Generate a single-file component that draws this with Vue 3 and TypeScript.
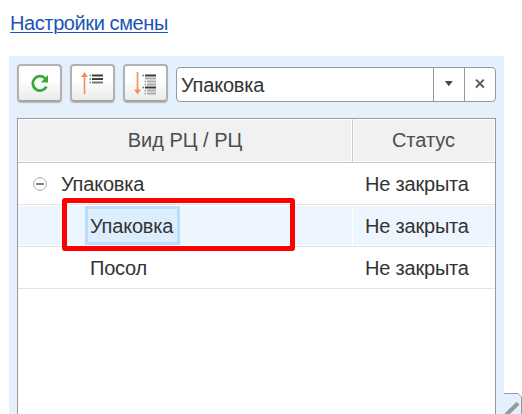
<script setup lang="ts">
import { ref } from 'vue'

interface Row {
  id: number
  name: string
  status: string
  level: number
}

const rows: Row[] = [
  { id: 1, name: 'Упаковка', status: 'Не закрыта', level: 0 },
  { id: 2, name: 'Упаковка', status: 'Не закрыта', level: 1 },
  { id: 3, name: 'Посол', status: 'Не закрыта', level: 1 },
]
const selected = ref(2)
const query = ref('Упаковка')
</script>

<template>
  <div class="page">
    <a class="link">Настройки смены</a>
    <section class="panel">
      <div class="toolbar">
        <button class="btn">
          <svg width="39" height="32" viewBox="0 0 39 32">
            <path d="M26.4 19.6A7.2 7.2 0 1 1 25.4 11.6" fill="none" stroke="#35a936" stroke-width="2.7" />
            <path d="M28 8V15.6H20.8Z" fill="#35a936" />
          </svg>
        </button>
        <button class="btn">
          <svg width="39" height="32" viewBox="0 0 39 32">
            <path d="M11.5 9V27" stroke="#f68d57" stroke-width="1.6" />
            <path d="M11.5 5L15 10H8Z" fill="#f68d57" />
            <path d="M16.5 8.5H18M16.5 12H18M16.5 15.5H18" stroke="#777" stroke-width="1.4" />
            <path d="M19 8.5H30M19 12H30" stroke="#3f3f3f" stroke-width="2.2" />
            <path d="M19 15.5H30" stroke="#777" stroke-width="2" />
          </svg>
        </button>
        <button class="btn">
          <svg width="39" height="32" viewBox="0 0 39 32">
            <path d="M11.5 5V23" stroke="#f68d57" stroke-width="1.6" />
            <path d="M11.5 27.4L15 22.4H8Z" fill="#f68d57" />
            <path d="M16.5 8.5H18M16.5 20.5H18" stroke="#666" stroke-width="1.6" />
            <path d="M19 8.5H30M19 20.5H30" stroke="#3a3a3a" stroke-width="2.2" />
            <path d="M19 11.5H30M21 14.5H30M21 17.5H30M21 23.5H30M21 26.5H30" stroke="#aaa" stroke-width="1.8" />
            <path d="M18.5 14.5H20M18.5 17.5H20M18.5 23.5H20M18.5 26.5H20" stroke="#999" stroke-width="1.4" />
          </svg>
        </button>
        <div class="combo">
          <span class="value">{{ query }}</span>
          <span class="part">
            <svg width="30" height="33" viewBox="0 0 30 33"><path d="M10.8 13H18.8L14.8 18.2Z" fill="#4a4a4a" /></svg>
          </span>
          <span class="part">
            <svg width="30" height="33" viewBox="0 0 30 33"><path d="M11 11.7L18.8 19.5M18.8 11.7L11 19.5" stroke="#555" stroke-width="1.8" /></svg>
          </span>
        </div>
      </div>
      <div class="table">
        <div class="line head">
          <div class="cell name">Вид РЦ / РЦ</div>
          <div class="cell status">Статус</div>
        </div>
        <div v-for="row in rows" :key="row.id" class="line row" :class="{ active: row.id === selected }">
          <div class="cell name" :class="{ child: row.level > 0 }">
            <svg v-if="row.level === 0" class="toggle" width="14" height="14" viewBox="0 0 14 14">
              <circle cx="7" cy="7" r="6.4" fill="#fff" stroke="#aaa" />
              <path d="M3 7H11" stroke="#777" stroke-width="1.8" />
            </svg>
            <span class="label">{{ row.name }}</span>
            <i v-if="row.id === selected" class="marker"></i>
          </div>
          <div class="cell status">{{ row.status }}</div>
        </div>
      </div>
    </section>
    <div class="corner">
      <svg width="18" height="21" viewBox="0 0 18 21">
        <path d="M0 .5H14L17.5 4V21H0Z" fill="#e4f0fc" />
        <path d="M0 .5H14L17.5 4V21" fill="none" stroke="#999" />
        <path d="M2 22L14 10.2" stroke="#999" stroke-width="4" />
      </svg>
    </div>
  </div>
</template>

<style>
body {
  margin: 0;
  background: #fff;
  overflow: hidden;
}
</style>

<style scoped>
* {
  box-sizing: border-box;
}
.page {
  position: relative;
  width: 522px;
  height: 414px;
  overflow: hidden;
  padding: 12px 18px 0 9px;
  font: 20px/23px "Liberation Sans", Arial, sans-serif;
  color: #333;
}
.link {
  display: block;
  height: 44px;
  padding-left: 1px;
  color: #1a55b4;
  letter-spacing: -0.4px;
  text-decoration: underline;
  text-decoration-thickness: 1px;
  text-underline-offset: 2px;
}
.panel {
  height: 358px;
  padding: 8px 8px 0;
  background: #e4f0fc;
}
.toolbar {
  display: flex;
  gap: 8px;
  height: 54px;
}
.btn {
  width: 45px;
  height: 38px;
  padding: 1px;
  border: 2px solid #b2b2b2;
  border-bottom-color: #a5a5a5;
  border-radius: 4px;
  background: linear-gradient(#fff 40%, #ebebeb);
  box-shadow: 0 1px 1px #b5b9bd;
}
.btn svg,
.part svg {
  display: block;
}
.combo {
  display: flex;
  width: 320px;
  height: 35px;
  margin-top: 3px;
  border: 1px solid #999;
  border-radius: 4px;
  background: #fff;
}
.value {
  flex: 1;
  padding: 6px 0 0 4px;
  letter-spacing: -0.2px;
}
.part {
  width: 31px;
  border-left: 1px solid #999;
}
.table {
  height: 300px;
  border: 1px solid #999;
  border-bottom: 0;
  background: #fff;
}
.line {
  display: flex;
  height: 42px;
  border-bottom: 1px solid #e2e2e2;
}
.cell {
  display: flex;
  align-items: center;
  border: 1px solid #fff;
}
.row .cell {
  padding-top: 2px;
  letter-spacing: -0.2px;
}
.name {
  width: 334px;
  padding-left: 14px;
}
.status {
  flex: 1;
  margin-left: 1px;
  padding-left: 11px;
}
.head {
  height: 44px;
  border-color: #c6c6c6;
  color: #4d4d4d;
}
.head .cell {
  justify-content: center;
  padding: 0;
  background: #f1f1f1;
}
.head .status {
  margin: 0;
  border-left: 1px solid #c6c6c6;
  box-shadow: inset 1px 0 #fff;
}
.toggle {
  margin: -2px 14px 0 0;
}
.active .cell {
  border-left-width: 0;
  border-right-width: 0;
  background: #edf6fe;
}
.active .status {
  padding-left: 12px;
}
.child {
  position: relative;
  padding-left: 71px;
}
.active .child {
  padding-top: 0;
  padding-left: 67px;
}
.active .label {
  width: 95px;
  height: 39px;
  padding: 6px 0 0 2px;
  border: 3px solid #b9ddfa;
  background: #dceefd;
}
.marker {
  position: absolute;
  z-index: 1;
  left: 44px;
  top: -8px;
  width: 233px;
  height: 53px;
  border: 5px solid #f00;
  border-radius: 3px;
}
.corner {
  position: absolute;
  left: 504px;
  top: 393px;
}
</style>
